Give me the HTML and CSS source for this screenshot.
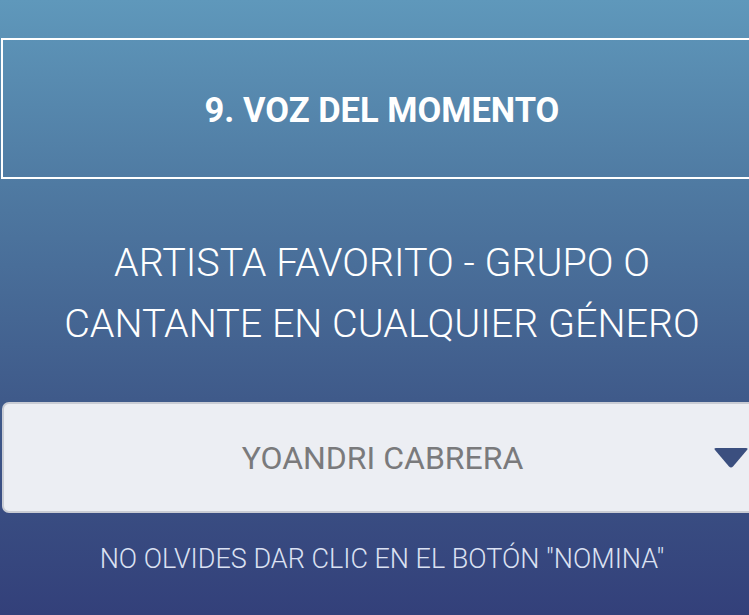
FILE: index.html
```html
<!DOCTYPE html>
<html lang="es">
<head>
<meta charset="utf-8">
<link rel="stylesheet" href="styles.css">
</head>
<body>
<div class="page">
  <div class="title-box">
    <h1 class="title">9. VOZ DEL MOMENTO</h1>
  </div>
  <p class="subtitle">ARTISTA FAVORITO - GRUPO O<br>CANTANTE EN CUALQUIER GÉNERO</p>
  <div class="select">
    <span class="select-value">YOANDRI CABRERA</span>
    <svg class="caret" viewBox="0 0 36 22" width="36" height="22"><path d="M3 1 H33 Q35.5 1 34 3 L20 19.5 Q18 21.5 16 19.5 L2 3 Q0.5 1 3 1 Z" fill="#3b4f7f"/></svg>
  </div>
  <p class="note">NO OLVIDES DAR CLIC EN EL BOTÓN "NOMINA"</p>
</div>
</body>
</html>
```
FILE: styles.css
```css
html, body {
  margin: 0;
  padding: 0;
  height: 100%;
  overflow: hidden;
}
body {
  background: linear-gradient(to bottom, #5f98bb 0%, #4f7aa2 30%, #3f5a8a 65%, #33407a 100%);
  font-family: Roboto, "Noto Sans", sans-serif;
  width: 749px;
  height: 615px;
}
.page {
  width: 762px;
  margin-left: 1px;
  padding-top: 38px;
  display: flex;
  flex-direction: column;
  align-items: stretch;
}
.title-box {
  height: 137px;
  border: 2px solid #ffffff;
  display: flex;
  align-items: center;
  justify-content: center;
}
.title {
  margin: 2px 0 0;
  color: #ffffff;
  font-weight: 700;
  font-size: 34.5px;
  letter-spacing: 0;
}
.subtitle {
  margin: 53px 0 0;
  text-align: center;
  color: #ffffff;
  font-weight: 300;
  font-size: 39.5px;
  line-height: 61px;
}
.select {
  margin: 48px 0 0 1px;
  height: 107px;
  background: #eceef3;
  border: 2px solid #c9ccd4;
  border-radius: 7px;
  position: relative;
  display: flex;
  align-items: center;
  justify-content: center;
}
.select-value {
  color: #7a7a7c;
  font-size: 32px;
  font-weight: 400;
}
.caret {
  position: absolute;
  left: 709px;
  top: 43px;
}
.note {
  margin: 30px 0 0;
  text-align: center;
  color: #dbe1f2;
  font-weight: 300;
  font-size: 27px;
}
```
